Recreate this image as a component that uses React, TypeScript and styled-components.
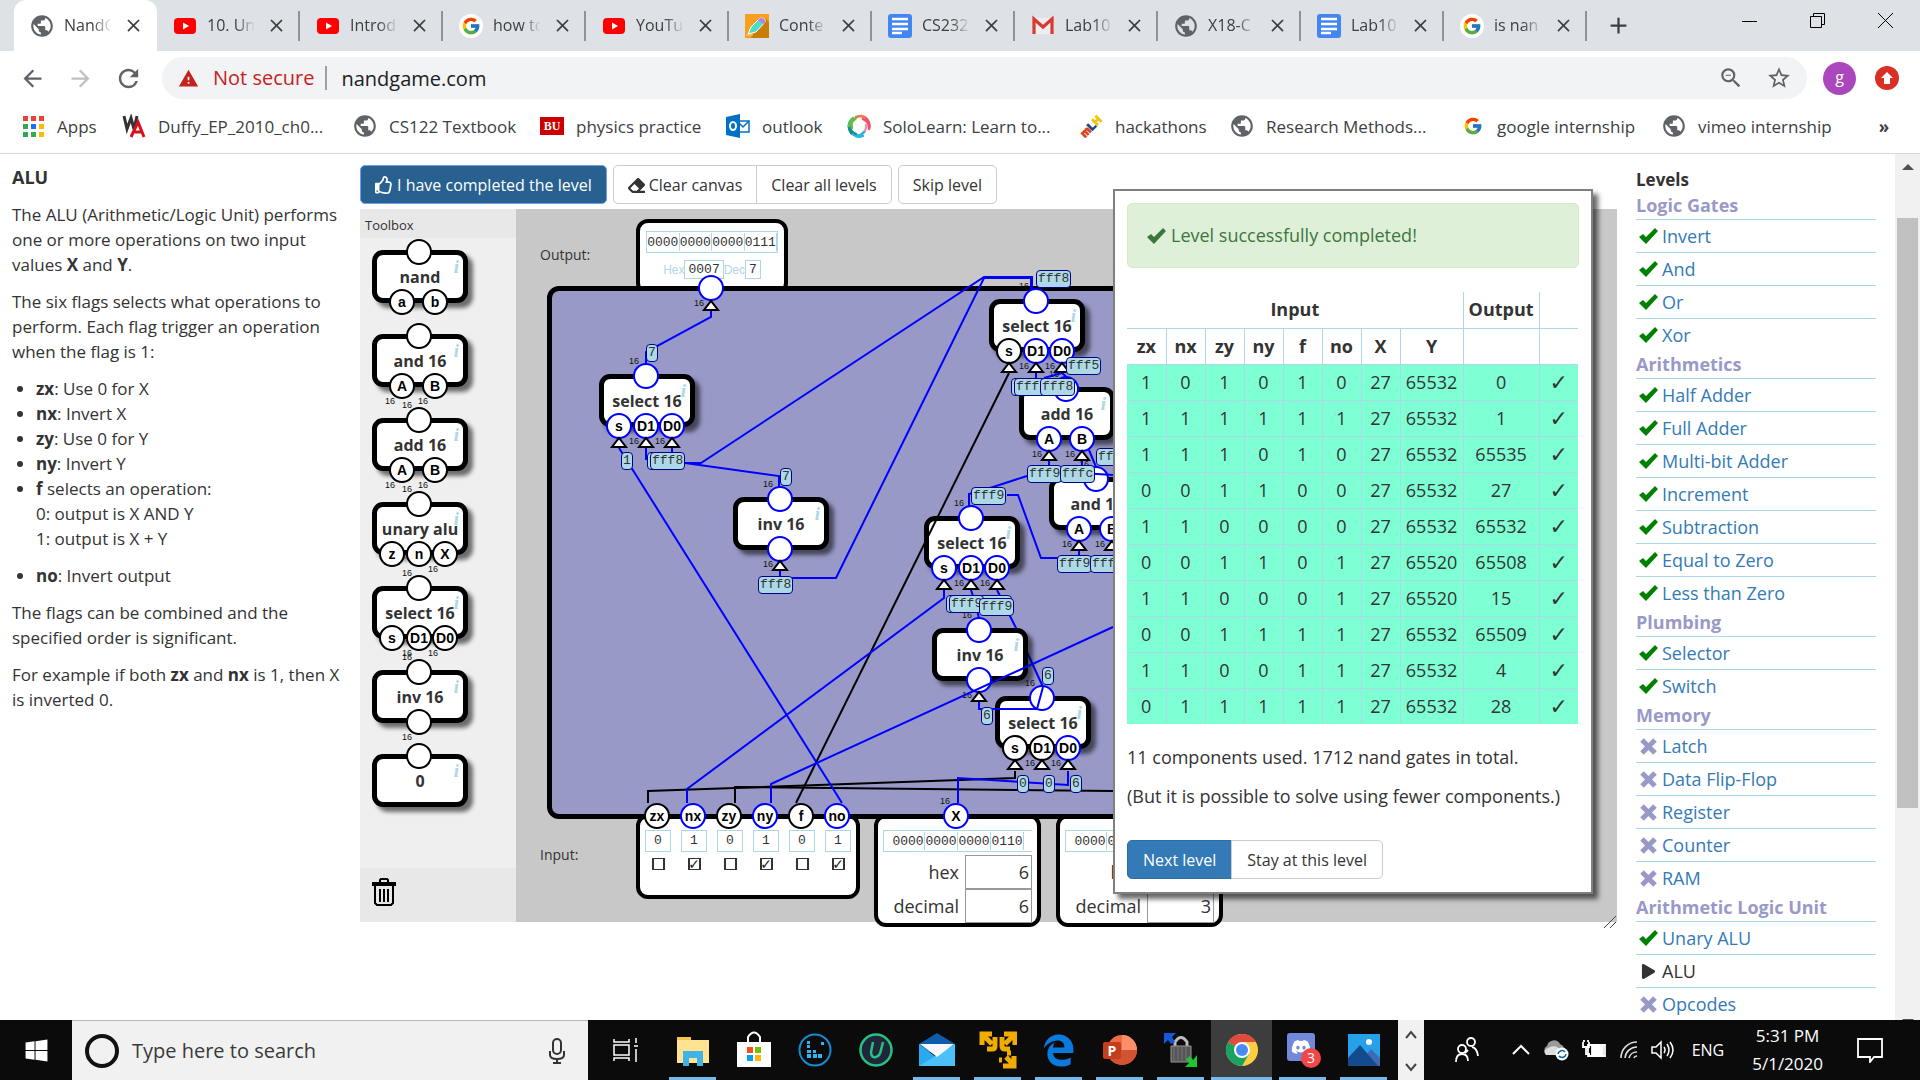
import React from 'react';
import styled, { createGlobalStyle } from 'styled-components';
import { FcGoogle } from 'react-icons/fc';
import { MdPublic, MdStarBorder, MdZoomOut, MdRefresh, MdArrowBack, MdArrowForward, MdClose, MdAdd, MdWarning } from 'react-icons/md';
import { FaRegThumbsUp, FaEraser, FaPlay, FaWindows, FaDiscord } from 'react-icons/fa';
import { FaEdgeLegacy } from 'react-icons/fa6';

const sans = '"Open Sans", "Noto Sans", sans-serif';
const arial = '"Liberation Sans", Arial, sans-serif';
const mono = '"Liberation Mono", "Courier New", monospace';

const GlobalStyle = createGlobalStyle`
  *, *::before, *::after { box-sizing: border-box; }
  body { margin: 0; background: #fff; font: 16px/25px ${sans}; color: #333; overflow: hidden; }
  button, input { font: inherit; color: inherit; margin: 0; }
  button { cursor: pointer; }
  a { text-decoration: none; color: inherit; }
  svg { display: block; flex: none; }
`;

const Desktop = styled.div`
  display: flex;
  flex-direction: column;
  height: 100vh;
`;

/* ---------- browser chrome ---------- */

const TabStrip = styled.div`
  display: flex;
  align-items: flex-start;
  height: 51px;
  padding-left: 14px;
  background: #dee1e6;
`;

const Tab = styled.div<{ $active?: boolean; $line?: boolean }>`
  display: flex;
  align-items: center;
  flex: 0 1 143px;
  min-width: 0;
  height: 51px;
  padding: 0 12px 0 16px;
  background-color: ${p => (p.$active ? '#fff' : 'transparent')};
  border-radius: ${p => (p.$active ? '12px 12px 0 0' : '0')};
  background-image: ${p => (p.$line ? 'linear-gradient(#8f9297, #8f9297)' : 'none')};
  background-size: 2px 30px;
  background-position: right center;
  background-repeat: no-repeat;
`;

const TabTitle = styled.span`
  flex: 1;
  min-width: 0;
  margin: 0 9px 0 10px;
  overflow: hidden;
  white-space: nowrap;
  font-size: 16px;
  color: #3c4043;
  mask-image: linear-gradient(90deg, #000 60%, transparent 100%);
`;

const IconButton = styled.button`
  display: flex;
  align-items: center;
  justify-content: center;
  flex: none;
  width: 24px;
  height: 24px;
  padding: 0;
  border: 0;
  background: none;
  color: #3c4043;
`;

const NewTab = styled(IconButton)`
  width: 62px;
  height: 51px;
`;

const WindowControls = styled.div`
  display: flex;
  margin-left: auto;
  button { width: 68px; height: 42px; color: #000; }
`;

const AddressRow = styled.div`
  display: flex;
  align-items: center;
  height: 54px;
  padding: 0 21px 0 18px;
`;

const NavButton = styled(IconButton)<{ $dim?: boolean }>`
  width: 28px;
  height: 28px;
  margin-right: 20px;
  color: ${p => (p.$dim ? '#bdc1c6' : '#5f6368')};
`;

const Omnibox = styled.div`
  display: flex;
  align-items: center;
  flex: 1;
  height: 42px;
  margin-right: 16px;
  padding: 0 16px;
  border-radius: 21px;
  background: #f1f3f4;
  font-size: 20px;
`;

const NotSecure = styled.span`
  display: flex;
  align-items: center;
  gap: 14px;
  margin-right: 14px;
  padding-right: 11px;
  border-right: 2px solid #9aa0a6;
  line-height: 24px;
  color: #c5221f;
`;

const UrlInput = styled.input`
  flex: 1;
  min-width: 0;
  border: 0;
  padding: 0;
  background: none;
  color: #202124;
`;

const OmniActions = styled.div`
  display: flex;
  gap: 24px;
  button { color: #5f6368; }
`;

const Avatar = styled.button`
  width: 33px;
  height: 33px;
  padding: 0 0 2px;
  border: 0;
  border-radius: 50%;
  background: #ab47bc;
  color: #fff;
  line-height: 30px;
`;

const UpdateButton = styled(IconButton)`
  margin-left: 19px;
  border-radius: 50%;
  background: #d93025;
`;

const BookmarkBar = styled.nav`
  display: flex;
  align-items: center;
  height: 49px;
  padding: 0 24px 6px 21px;
  border-bottom: 1px solid #d5d7d9;
  color: #3c4043;
  font-size: 17px;
`;

const MoreBookmarks = styled(IconButton)`
  margin-left: auto;
  font-weight: bold;
`;

const Bookmark = styled.a<{ $w: number }>`
  display: flex;
  align-items: center;
  gap: 12px;
  flex: 0 1 ${p => p.$w}px;
  white-space: nowrap;
`;

/* ---------- page ---------- */

const Page = styled.main`
  display: grid;
  grid-template-columns: 360px minmax(0, 1fr) 278px 25px;
  flex: 1;
  min-height: 0;
  overflow: hidden;
`;

const Description = styled.section`
  padding: 11px 12px;
  font-size: 17px;
  h1 { margin: 0 0 12px; font-size: 18px; line-height: 25px; }
  p { margin: 0 0 12px; }
  ul { margin: 0 0 12px; padding-left: 24px; }
  li + li:last-child { margin-top: 12px; }
`;

const Workspace = styled.section`
  position: relative;
  padding-top: 11px;
`;

const ButtonRow = styled.div`
  display: flex;
  gap: 6px;
  margin-bottom: 5px;
`;

const ButtonGroup = styled.div`
  display: flex;
  button:not(:first-child) { border-top-left-radius: 0; border-bottom-left-radius: 0; margin-left: -1px; }
  button:not(:last-child) { border-top-right-radius: 0; border-bottom-right-radius: 0; }
`;

const Button = styled.button<{ $kind?: 'primary' | 'active' }>`
  display: flex;
  align-items: center;
  gap: 4px;
  height: 39px;
  padding: 1px 14px 0;
  white-space: nowrap;
  border: 1px solid ${p => (p.$kind === 'active' ? '#6f9fe8' : p.$kind ? '#2e6da4' : '#ccc')};
  border-radius: 5px;
  background: ${p => (p.$kind === 'active' ? '#286090' : p.$kind ? '#337ab7' : '#fff')};
  color: ${p => (p.$kind ? '#fff' : '#333')};
`;

const Stage = styled.div`
  display: flex;
  height: 713px;
`;

const Toolbox = styled.aside`
  display: flex;
  flex-direction: column;
  width: 156px;
  background: #efefef;
`;

const ToolboxTitle = styled.div`
  height: 29px;
  padding: 4px 5px;
  background: #e8e8e8;
  font-size: 13px;
`;

const ToolList = styled.div`
  display: flex;
  flex-direction: column;
  gap: 31px;
  flex: 1;
  padding: 12px;
`;

const TrashBar = styled.div`
  height: 54px;
  padding: 9px 12px;
  background: #e8e8e8;
`;

const Canvas = styled.div`
  position: relative;
  flex: 1;
  background: #c8c8c8;
`;

const CanvasLabel = styled.span<{ $y: number }>`
  position: absolute;
  left: 24px;
  top: ${p => p.$y}px;
  font-size: 14px;
`;

const Board = styled.div`
  position: absolute;
  left: 31px;
  right: 37px;
  top: 77px;
  height: 533px;
  border: 5px solid #000;
  border-radius: 12px;
  background: #9999c8;
`;

const WireLayer = styled.svg`
  position: absolute;
  left: 0;
  top: 0;
  width: 100%;
  height: 100%;
  fill: none;
  pointer-events: none;
`;

const GateBox = styled.div`
  position: relative;
  display: flex;
  align-items: center;
  justify-content: center;
  width: 96px;
  height: 53px;
  padding-top: 2px;
  border: 5px solid #000;
  border-radius: 11px;
  background: #fff;
  box-shadow: 5px 5px 4px rgba(0, 0, 0, 0.55);
  font-weight: bold;
  white-space: nowrap;
`;

const Placed = styled.div<{ $x: number; $y: number }>`
  position: absolute;
  left: ${p => p.$x}px;
  top: ${p => p.$y}px;
`;

const InfoMark = styled.i`
  position: absolute;
  right: 4px;
  top: 2px;
  font: italic bold 19px/20px "Liberation Serif", serif;
  color: #add8e6;
`;

const Pin = styled.span<{ $on?: boolean; $x: number; $y: number }>`
  position: absolute;
  left: ${p => p.$x}px;
  top: ${p => p.$y}px;
  width: 26px;
  height: 26px;
  margin: -13px 0 0 -13px;
  border: 2px solid ${p => (p.$on ? '#0000ff' : '#000')};
  border-radius: 50%;
  background: #fff;
  font: bold 14px/22px ${arial};
  text-align: center;
  color: #000;
`;

const Width16 = styled.span<{ $x: number; $y: number }>`
  position: absolute;
  left: ${p => p.$x}px;
  top: ${p => p.$y}px;
  width: 20px;
  margin: -6px 0 0 -10px;
  font: 9px/12px ${arial};
  text-align: center;
  color: #111;
`;

const ValueTag = styled.span<{ $x: number; $y: number }>`
  position: absolute;
  left: ${p => p.$x}px;
  top: ${p => p.$y}px;
  height: 18px;
  padding: 0 1px;
  border: 1px solid #00008b;
  border-radius: 4px;
  background: #add8e6;
  font: 13px/16px ${mono};
`;

const Terminal = styled.div<{ $x: number; $y: number; $w: number; $h: number }>`
  position: absolute;
  left: ${p => p.$x}px;
  top: ${p => p.$y}px;
  width: ${p => p.$w}px;
  height: ${p => p.$h}px;
  border: 4px solid #000;
  border-radius: 12px;
  background: #fff;
`;

const OutputBody = styled.div`
  display: flex;
  flex-direction: column;
  align-items: center;
  gap: 7px;
  padding: 8px 6px;
`;

const InputBody = styled.div`
  padding: 12px 5px 0;
`;

const BitsBox = styled.div<{ $open?: boolean }>`
  display: flex;
  justify-content: center;
  width: 100%;
  height: 22px;
  padding: 1px 0;
  border: 1px solid #add8e6;
  border-right-width: ${p => (p.$open ? '0' : '1px')};
`;

const Nibble = styled.span`
  width: 33px;
  border-right: 1px solid #add8e6;
  font: 13px/19px ${mono};
  text-align: center;
`;

const HexRow = styled.div`
  display: flex;
  align-items: center;
  font: 12px/18px ${arial};
  color: #add8e6;
`;

const HexBox = styled.span`
  padding: 0 3px;
  border: 1px solid #add8e6;
  font: 13px/17px ${mono};
  color: #333;
`;

const FlagRow = styled.div`
  display: grid;
  grid-template-columns: repeat(6, 1fr);
  padding-top: 12px;
`;

const Flag = styled.label`
  display: flex;
  flex-direction: column;
  align-items: center;
  gap: 6px;
  font: 13px/20px ${mono};
  span { width: 26px; height: 22px; border: 1px solid #add8e6; text-align: center; }
`;

const CheckBox = styled.input`
  display: flex;
  align-items: center;
  justify-content: center;
  appearance: none;
  width: 13px;
  height: 12px;
  border: 1px solid #333;
  border-width: 1px 2px;
  &:checked::after { content: '✓'; font: bold 14px/10px "DejaVu Sans", sans-serif; color: #222; }
`;

const NumberRow = styled.label`
  display: flex;
  align-items: center;
  justify-content: flex-end;
  gap: 6px;
  height: 34px;
  font-size: 18px;
  &:first-of-type { margin-top: 3px; }
`;

const NumberInput = styled.input`
  width: 67px;
  height: 34px;
  padding: 0 2px;
  border: 1px solid #999;
  border-radius: 0;
  background: #fff;
  text-align: right;
`;

const ResizeGrip = styled.svg`
  position: absolute;
  right: 0;
  bottom: -7px;
`;

/* ---------- result dialog ---------- */

const Dialog = styled.div`
  position: absolute;
  right: 24px;
  top: 35px;
  width: 480px;
  height: 705px;
  padding: 12px;
  border: 2px solid #808080;
  background: #fff;
  box-shadow: 5px 5px 5px rgba(0, 0, 0, 0.6);
  font-size: 18px;
  p { margin: 0 0 12px; line-height: 27px; white-space: nowrap; }
`;

const Alert = styled.div`
  display: flex;
  align-items: center;
  gap: 5px;
  height: 65px;
  margin-bottom: 24px;
  padding: 0 19px;
  border: 1px solid #d6e9c6;
  border-radius: 5px;
  background: #dff0d8;
  color: #3c763d;
`;

const ResultTable = styled.table`
  width: 451px;
  margin-bottom: 20px;
  border-collapse: collapse;
  table-layout: fixed;
  text-align: center;
  th, td { height: 36px; padding: 0; border: 1px solid #add8e6; line-height: 27px; }
  tr > :first-child { border-left: 0; }
  tr > :last-child { border-right: 0; }
  thead tr:first-child th { border-top: 0; }
  tbody tr:last-child td { border-bottom: 0; }
  tbody { background: #7fffd4; }
  tbody td:last-child { font: bold 22px/27px "DejaVu Sans", sans-serif; }
`;

const DialogActions = styled(ButtonGroup)`
  margin-top: 30px;
  font-size: 16px;
  button { padding: 1px 15px 0; }
`;

/* ---------- levels ---------- */

const Levels = styled.nav`
  padding: 14px 19px;
  font-size: 18px;
  h2 { margin: 0; font-size: 17px; line-height: 24px; }
  h3 { margin: 0; height: 27px; font-size: 18px; line-height: 26px; color: #9999c8; white-space: nowrap; }
`;

const LevelLink = styled.a<{ $current?: boolean }>`
  display: flex;
  align-items: center;
  height: 33px;
  border-top: 1px solid #add8e6;
  color: ${p => (p.$current ? '#333' : '#337ab7')};
  svg { width: 19px; margin: 0 4px 0 3px; }
`;

const Scrollbar = styled.div`
  display: flex;
  flex-direction: column;
  align-items: center;
  min-height: 0;
  padding: 10px 0 9px;
  background: #f1f1f1;
`;

const Thumb = styled.div`
  width: 21px;
  height: 590px;
  margin: 48px 0 auto;
  background: #c1c1c1;
`;

/* ---------- taskbar ---------- */

const Taskbar = styled.footer`
  display: flex;
  height: 60px;
  background: #0b0b0b;
  color: #fff;
`;

const TaskButton = styled.button<{ $w?: number; $open?: boolean; $active?: boolean }>`
  position: relative;
  display: flex;
  align-items: center;
  justify-content: center;
  width: ${p => p.$w ?? 61}px;
  height: 60px;
  padding: 0;
  border: 0;
  background: ${p => (p.$active ? '#3d3d3d' : 'none')};
  color: #fff;
  &::after {
    content: '';
    position: absolute;
    left: ${p => (p.$active ? 0 : 7)}px;
    right: ${p => (p.$active ? 0 : 7)}px;
    bottom: 0;
    height: 3px;
    background: ${p => (p.$open ? '#76b9ed' : 'none')};
  }
`;

const SearchBox = styled.label`
  display: flex;
  align-items: center;
  width: 516px;
  padding: 0 22px 0 13px;
  border-top: 1px solid #b5b5b5;
  background: #f1f1f1;
  input { flex: 1; min-width: 0; margin-left: 13px; padding: 0; border: 0; background: none; font-size: 20px; }
  input::placeholder { color: #3a3a3a; opacity: 1; }
`;

const TaskScroll = styled.div`
  display: flex;
  flex-direction: column;
  align-items: center;
  justify-content: space-between;
  width: 26px;
  margin-left: 4px;
  padding: 10px 0 8px;
  background: #f1f1f1;
`;

const Tray = styled.div`
  display: flex;
  align-items: center;
  justify-content: flex-end;
  gap: 12px;
  flex: 1;
  padding-right: 37px;
  & > :first-child { margin-right: 20px; }
`;

const Clock = styled.time`
  display: flex;
  flex-direction: column;
  align-items: center;
  margin: 0 22px 0 16px;
  font-size: 17px;
  line-height: 28px;
`;

const TrayText = styled.span`
  margin-left: 5px;
`;

/* ---------- icons ---------- */

const YouTubeIcon = () => (
  <svg width="24" height="24" viewBox="0 0 24 24"><rect x="1" y="4" width="22" height="16" rx="4" fill="#f00" /><path d="M10 8.5v7l6-3.5z" fill="#fff" /></svg>
);
const DocsIcon = () => (
  <svg width="24" height="24" viewBox="0 0 24 24"><rect width="24" height="24" rx="3" fill="#4285f4" /><path d="M4 5h16M4 10h16M4 15h16M4 19h10" stroke="#fff" strokeWidth="2.4" /></svg>
);
const GmailIcon = () => (
  <svg width="24" height="24" viewBox="0 0 24 24"><path d="M3 4h18v16H3z" fill="#eee" /><path d="M3 20V5l9 8 9-8v15" fill="none" stroke="#d93a30" strokeWidth="3.2" /></svg>
);
const PencilIcon = () => (
  <svg width="24" height="24" viewBox="0 0 24 24"><path d="M0 0h24v24H0z" fill="#f7a01d" /><path d="M21 5l3 3v16H6l1-3z" fill="#c97c08" /><path d="M3 20l3-7L16 3l5 4-10 11z" fill="#4fdcc8" stroke="#fff" /><path d="M16 3l5 4-2 3-6-4z" fill="#c07be0" /><path d="M1 21h7" stroke="#ffd58a" /></svg>
);
const GoogleIcon = () => (
  <svg width="24" height="24" viewBox="0 0 24 24"><circle cx="12" cy="12" r="12" fill="#fff" /><g transform="translate(2 2)"><FcGoogle size={20} /></g></svg>
);
const Globe = () => (
  <svg width="24" height="24" viewBox="0 0 24 24"><g transform="translate(-1 -1)"><MdPublic size={26} color="#5f6368" /></g></svg>
);
const AppsIcon = () => (
  <svg width="24" height="24" viewBox="0 0 24 24">
    {['#ea4335', '#ea4335', '#ea4335', '#34a853', '#1a73e8', '#fbbc04', '#34a853', '#34a853', '#fbbc04'].map((c, i) => (
      <rect key={i} x={2 + (i % 3) * 8} y={2 + Math.floor(i / 3) * 8} width="5" height="5" fill={c} />
    ))}
  </svg>
);
const WaIcon = () => (
  <svg width="24" height="24" viewBox="0 0 24 24" fill="none" strokeWidth="3"><path d="M2 2l3 13L9 4l3 11L15 2" stroke="#333" /><path d="M9 23l7-15 6 15M12 18h8" stroke="#d5121b" /></svg>
);
const BuIcon = () => (
  <svg width="24" height="24" viewBox="0 0 24 24"><path d="M0 3h24v18H0z" fill="#c00" /><text x="12" y="16" fill="#fff" fontSize="12" fontWeight="bold" textAnchor="middle" fontFamily="Liberation Serif, serif">BU</text></svg>
);
const OutlookIcon = () => (
  <svg width="24" height="24" viewBox="0 0 24 24"><path d="M12 7h11v11H12z" fill="#fff" stroke="#0072c6" strokeWidth="1.5" /><path d="M13 9l4 4 6-6" fill="none" stroke="#0072c6" strokeWidth="1.5" /><path d="M0 3l14-3v24L0 21z" fill="#0072c6" /><ellipse cx="7" cy="12" rx="3" ry="4" fill="none" stroke="#fff" strokeWidth="2" /></svg>
);
const SoloIcon = () => (
  <svg width="24" height="24" viewBox="0 0 24 24" fill="none" strokeWidth="2.4" strokeLinecap="round">
    <path d="M7 6q4-6 11-3M9 3q6-2 10 1" stroke="#f2784b" />
    <path d="M16 5q6 2 6 9M20 5q4 5 2 10" stroke="#f0506e" />
    <path d="M19 11q1 7-6 10" stroke="#f48fb1" />
    <path d="M17 18q-5 6-12 2M16 22q-5 2-9-1" stroke="#29b6e0" />
    <path d="M9 20q-7-3-6-10M4 19Q0 13 3 8" stroke="#12908e" />
    <path d="M5 14Q3 8 9 4M2 12q0-5 4-8" stroke="#66bb4f" />
  </svg>
);
const MlhIcon = () => (
  <svg width="24" height="24" viewBox="0 0 24 24"><g transform="rotate(-45 12 12)" fontFamily="Liberation Sans, sans-serif" fontWeight="bold" fontSize="11" strokeWidth="1"><text x="-1" y="16" fill="#d9441e" stroke="#d9441e">m</text><text x="9" y="16" fill="#1d539f" stroke="#1d3c70">L</text><text x="16" y="16" fill="#f2c500" stroke="#f2c500">H</text></g></svg>
);
const TrashIcon = () => (
  <svg width="24" height="30" viewBox="0 0 24 30" fill="none" stroke="#000" strokeWidth="2"><path d="M8 5V3l1-1h6l1 1v2" /><path d="M0 7h24" strokeWidth="4" /><path d="M3 9v17l2 2h14l2-2V9" /><path d="M8 12v13M12 12v13M16 12v13" /></svg>
);
const CheckMark = ({ color }: { color: string }) => (
  <svg width="19" height="16" viewBox="0 0 19 16"><path d="M0 9l4-3 3 3L16 0l3 3L7 16z" fill={color} /></svg>
);
const CrossMark = () => (
  <svg width="17" height="17" viewBox="0 0 17 17"><path d="M2 2l13 13M15 2L2 15" stroke="#9999c8" strokeWidth="5" /></svg>
);
const ArrowMark = ({ down }: { down?: boolean }) => (
  <svg width="12" height="6" viewBox="0 0 12 6"><path d={down ? 'M0 0h12L6 6z' : 'M0 6h12L6 0z'} fill="#505050" /></svg>
);

/* ---------- gates ---------- */

type Kind = { name: string; pins: string[]; wide: number[] };
const KINDS: Record<string, Kind> = {
  nand: { name: 'nand', pins: ['a', 'b'], wide: [] },
  and: { name: 'and 16', pins: ['A', 'B'], wide: [0, 1] },
  add: { name: 'add 16', pins: ['A', 'B'], wide: [0, 1] },
  unary: { name: 'unary alu', pins: ['z', 'n', 'X'], wide: [2] },
  select: { name: 'select 16', pins: ['s', 'D1', 'D0'], wide: [1, 2] },
  inv: { name: 'inv 16', pins: [''], wide: [0] },
  zero: { name: '0', pins: [], wide: [] },
};
const PIN_X: Record<number, number[]> = { 0: [], 1: [42], 2: [25, 58], 3: [15, 42, 68] };

const Triangle = ({ x, y }: { x: number; y: number }) => (
  <path d={`M${x - 7} ${y + 10}h14l-7-9z`} fill="#fff" stroke="#000" strokeWidth="2" />
);

function Gate({ kind, live, dark = [], out16 }: { kind: string; live?: boolean; dark?: number[]; out16?: boolean }) {
  const k = KINDS[kind];
  const xs = PIN_X[k.pins.length];
  return (
    <GateBox>
      <InfoMark>i</InfoMark>
      {k.name}
      {out16 && <Width16 $x={30} $y={-18}>16</Width16>}
      <Pin $x={42} $y={-3} $on={live} />
      {k.wide.map(i => <Width16 key={i} $x={xs[i] - 12} $y={62}>16</Width16>)}
      {k.pins.map((p, i) => <Pin key={i} $x={xs[i]} $y={47} $on={live && !dark.includes(i)}>{p}</Pin>)}
    </GateBox>
  );
}

const TOOLS: [string, boolean][] = [['nand', false], ['and', false], ['add', true], ['unary', true], ['select', true], ['inv', true], ['zero', false]];

/* x is the centre of the output pin, y the top edge of the gate */
const GATES: { kind: string; x: number; y: number; dark?: number[] }[] = [
  { kind: 'select', x: 130, y: 165 },
  { kind: 'inv', x: 264, y: 288 },
  { kind: 'select', x: 520, y: 90, dark: [0] },
  { kind: 'add', x: 550, y: 178 },
  { kind: 'and', x: 580, y: 268 },
  { kind: 'select', x: 455, y: 307 },
  { kind: 'inv', x: 463, y: 419 },
  { kind: 'select', x: 526, y: 487, dark: [0, 1] },
];

const BACK_WIRES = ['481,381 500,419 527,478', '546,164 562,178 562,186', '573,241 580,258 586,261'];
const BLUE_WIRES = [
  '195,101 195,108 130,143 130,156',
  '103,239 326,594',
  '130,239 130,250 140,253',
  '156,239 156,248',
  '169,254 185,254 468,68 516,68 516,81',
  '169,254 263,267 263,278',
  '264,362 264,369 320,369 468,69 515,69 515,81',
  '520,164 520,170',
  '546,164 528,169',
  '533,252 533,257',
  '511,267 474,279 453,285 453,298',
  '491,286 502,286 525,349 563,349 563,342',
  '566,252 566,264 597,266',
  '428,381 428,389 171,580 171,594',
  '455,381 457,387 463,409',
  '527,478 521,500 463,500 463,492',
  '255,594 255,575 597,418',
  '442,594 442,569 552,576 552,562',
];
const BLACK_WIRES = ['493,164 280,594', '132,594 132,582 499,569 499,562', '219,594 219,578 597,582'];

const TAGS: [number, number, string][] = [
  [130, 135, '7'], [105, 243, '1'], [131, 243, 'fff8'], [134, 243, 'fff8'], [264, 259, '7'], [242, 367, 'fff8'],
  [520, 61, 'fff8'], [495, 169, 'fff8'], [498, 169, 'fff8'], [524, 169, 'fff8'], [550, 148, 'fff5'],
  [580, 239, 'fffc'], [511, 256, 'fff9'], [544, 256, 'fffc'], [455, 278, 'fff9'], [541, 346, 'fff9'], [574, 346, 'fffc'],
  [461, 386, 'fff9'], [430, 386, 'fff9'], [433, 386, 'fff9'], [463, 389, 'fff9'], [526, 458, '6'], [465, 498, '6'],
  [501, 566, '0'], [527, 566, '0'], [554, 566, '6'],
];

const FLAGS: [string, boolean][] = [['zx', false], ['nx', true], ['zy', false], ['ny', true], ['f', false], ['no', true]];

const Bits = ({ value, open }: { value: string[]; open?: boolean }) => (
  <BitsBox $open={open}>{value.map((n, i) => <Nibble key={i}>{n}</Nibble>)}</BitsBox>
);

function WordInput({ x, bits, value }: { x: number; bits: string[]; value: string }) {
  return (
    <Terminal $x={x} $y={605} $w={167} $h={113}>
      <InputBody>
        <Bits open value={bits} />
        <NumberRow>hex<NumberInput defaultValue={value} /></NumberRow>
        <NumberRow>decimal<NumberInput defaultValue={value} /></NumberRow>
      </InputBody>
    </Terminal>
  );
}

function Circuit() {
  return (
    <Canvas>
      <CanvasLabel $y={33}>Output:</CanvasLabel>
      <CanvasLabel $y={633}>Input:</CanvasLabel>
      <Terminal $x={120} $y={10} $w={152} $h={76}>
        <OutputBody>
          <Bits value={['0000', '0000', '0000', '0111']} />
          <HexRow>Hex<HexBox>0007</HexBox>Dec<HexBox>7</HexBox></HexRow>
        </OutputBody>
      </Terminal>
      <Terminal $x={120} $y={605} $w={224} $h={85}>
        <FlagRow>
          {FLAGS.map(([name, on]) => (
            <Flag key={name}><span>{on ? 1 : 0}</span><CheckBox type="checkbox" aria-label={name} defaultChecked={on} /></Flag>
          ))}
        </FlagRow>
      </Terminal>
      <WordInput x={358} bits={['0000', '0000', '0000', '0110']} value="6" />
      <WordInput x={540} bits={['0000', '0000', '0000', '0011']} value="3" />
      <Board />
      <WireLayer>
        {BACK_WIRES.map(w => <polyline key={w} points={w} stroke="#0000ff" strokeWidth="2" />)}
      </WireLayer>
      {GATES.map(g => (
        <Placed key={`${g.x}-${g.y}`} $x={g.x - 47} $y={g.y}><Gate kind={g.kind} live out16 dark={g.dark} /></Placed>
      ))}
      <Pin $x={195} $y={79} $on />
      <Width16 $x={183} $y={94}>16</Width16>
      {FLAGS.map(([name, on], i) => <Pin key={name} $x={141 + i * 36} $y={607} $on={on}>{name}</Pin>)}
      <Pin $x={440} $y={607} $on>X</Pin>
      <Width16 $x={429} $y={592}>16</Width16>
      <WireLayer>
        {BLACK_WIRES.map(w => <polyline key={w} points={w} stroke="#000" strokeWidth="2" />)}
        {BLUE_WIRES.map(w => <polyline key={w} points={w} stroke="#0000ff" strokeWidth="2" />)}
        <Triangle x={195} y={91} />
        {GATES.map(g => PIN_X[KINDS[g.kind].pins.length].map(px => <Triangle key={`${g.x}-${g.y}-${px}`} x={g.x - 42 + px} y={g.y + 63} />))}
      </WireLayer>
      {TAGS.map(([x, y, t]) => <ValueTag key={`${x}-${y}`} $x={x} $y={y}>{t}</ValueTag>)}
      <ResizeGrip width="14" height="14" viewBox="0 0 14 14"><path d="M1 13L13 1M7 13l6-6" stroke="#444" /></ResizeGrip>
    </Canvas>
  );
}

const HEAD = ['zx', 'nx', 'zy', 'ny', 'f', 'no', 'X', 'Y', '', ''];
const WIDTHS = [39, 39, 39, 39, 39, 39, 39, 63, 76, 39];
const ROWS = [
  '1 0 1 0 1 0 27 65532 0', '1 1 1 1 1 1 27 65532 1', '1 1 1 0 1 0 27 65532 65535', '0 0 1 1 0 0 27 65532 27',
  '1 1 0 0 0 0 27 65532 65532', '0 0 1 1 0 1 27 65520 65508', '1 1 0 0 0 1 27 65520 15', '0 0 1 1 1 1 27 65532 65509',
  '1 1 0 0 1 1 27 65532 4', '0 1 1 1 1 1 27 65532 28',
];

function ResultDialog() {
  return (
    <Dialog role="dialog" aria-label="Level result">
      <Alert><CheckMark color="#3c763d" />Level successfully completed!</Alert>
      <ResultTable>
        <colgroup>{WIDTHS.map((w, i) => <col key={i} width={w} />)}</colgroup>
        <thead>
          <tr><th colSpan={8}>Input</th><th>Output</th><th /></tr>
          <tr>{HEAD.map((h, i) => <th key={i}>{h}</th>)}</tr>
        </thead>
        <tbody>
          {ROWS.map(r => <tr key={r}>{r.split(' ').map((c, i) => <td key={i}>{c}</td>)}<td>✓</td></tr>)}
        </tbody>
      </ResultTable>
      <p>11 components used. 1712 nand gates in total.</p>
      <p>(But it is possible to solve using fewer components.)</p>
      <DialogActions>
        <Button $kind="primary">Next level</Button>
        <Button>Stay at this level</Button>
      </DialogActions>
    </Dialog>
  );
}

const LEVELS: [string, [string, string][]][] = [
  ['Logic Gates', [['Invert', 'ok'], ['And', 'ok'], ['Or', 'ok'], ['Xor', 'ok']]],
  ['Arithmetics', [['Half Adder', 'ok'], ['Full Adder', 'ok'], ['Multi-bit Adder', 'ok'], ['Increment', 'ok'], ['Subtraction', 'ok'], ['Equal to Zero', 'ok'], ['Less than Zero', 'ok']]],
  ['Plumbing', [['Selector', 'ok'], ['Switch', 'ok']]],
  ['Memory', [['Latch', 'no'], ['Data Flip-Flop', 'no'], ['Register', 'no'], ['Counter', 'no'], ['RAM', 'no']]],
  ['Arithmetic Logic Unit', [['Unary ALU', 'ok'], ['ALU', 'now'], ['Opcodes', 'no']]],
];

const TABS: [React.ReactNode, string][] = [
  [<Globe />, 'NandG'], [<YouTubeIcon />, '10. Un'], [<YouTubeIcon />, 'Introd'], [<GoogleIcon />, 'how to'],
  [<YouTubeIcon />, 'YouTu'], [<PencilIcon />, 'Conte'], [<DocsIcon />, 'CS232'], [<GmailIcon />, 'Lab10'],
  [<Globe />, 'X18-C'], [<DocsIcon />, 'Lab10'], [<GoogleIcon />, 'is nan'],
];

const BOOKMARKS: [React.ReactNode, string, number][] = [
  [<AppsIcon />, 'Apps', 101], [<WaIcon />, 'Duffy_EP_2010_ch0...', 231], [<Globe />, 'CS122 Textbook', 187], [<BuIcon />, 'physics practice', 186],
  [<OutlookIcon />, 'outlook', 121], [<SoloIcon />, 'SoloLearn: Learn to...', 232], [<MlhIcon />, 'hackathons', 151], [<Globe />, 'Research Methods...', 231],
  [<GoogleIcon />, 'google internship', 201], [<Globe />, 'vimeo internship', 158],
];

const TaskIcons: { label: string; open?: boolean; active?: boolean; icon: React.ReactNode }[] = [
  { label: 'File Explorer', open: true, icon: <svg width="34" height="34" viewBox="0 0 34 34"><path d="M1 4h14v3h18v23H1z" fill="#f5c64b" /><path d="M1 7h32v23H1z" fill="#ffe393" /><path d="M7 33V18h20v15h-6v-8h-8v8z" fill="#3fb4e8" /></svg> },
  { label: 'Store', icon: <svg width="36" height="38" viewBox="0 0 36 38"><path d="M12 11V6q6-9 12 0v5" fill="none" stroke="#fff" strokeWidth="2" /><path d="M1 11h34v25H1z" fill="#fff" /><path d="M11 16h6v6h-6z" fill="#f25022" /><path d="M19 16h6v6h-6z" fill="#7fba00" /><path d="M11 24h6v6h-6z" fill="#00a4ef" /><path d="M19 24h6v6h-6z" fill="#ffb900" /></svg> },
  { label: 'Monitor', icon: <svg width="34" height="34" viewBox="0 0 34 34"><circle cx="17" cy="17" r="15.500" fill="none" stroke="#158bd4" strokeWidth="2" /><path d="M9 8h3v3H9zM9 12h3v3H9zM9 17h4v3H9zM9 21h4v4H9zM15 17h3v3h-3zM15 21h4v4h-4zM20 21h4v4h-4zM23 9h3v3h-3z" fill="#30b4f5" /></svg> },
  { label: 'IObit', icon: <svg width="34" height="34" viewBox="0 0 34 34" fill="none"><circle cx="17" cy="17" r="15.500" fill="#22263a" stroke="#26c281" strokeWidth="2.500" /><path d="M14 9l-2 10q0 6 5 5 4-1 5-7l2-8" stroke="#26c281" strokeWidth="2.500" /></svg> },
  { label: 'Mail', open: true, icon: <svg width="38" height="36" viewBox="0 0 38 36"><path d="M19 1l18 11v8H1v-8z" fill="#0f5cab" /><path d="M1 12l18 14 18-14v22H1z" fill="#29a9ee" /><path d="M1 34l36-22v22z" fill="#4cc0f8" /><path d="M2 12h34L19 25z" fill="#f4f8fb" /></svg> },
  { label: 'VMware', open: true, icon: <svg width="38" height="38" viewBox="0 0 38 38" fill="none" stroke="#f0ad00" strokeWidth="5"><path d="M3 14V3h10M4 4l9 9M16 6v9q0 3-3 3H8" /><path d="M25 3h11v11M35 4l-9 9M23 6v9q0 3 3 3h5" /><path d="M35 25v10H24M35 34l-8-8M20 29h3M28 22h4" /></svg> },
  { label: 'Edge', open: true, icon: <FaEdgeLegacy size={33} color="#0a7bdc" /> },
  { label: 'PowerPoint', open: true, icon: <svg width="36" height="34" viewBox="0 0 36 34"><circle cx="20" cy="17" r="15" fill="#ed6c47" /><path d="M20 2a15 15 0 0 1 15 15H20z" fill="#ff8f6b" /><path d="M5 17a15 15 0 0 0 30 0z" fill="#d35230" /><rect x="1" y="9" width="18" height="17" rx="2" fill="#c43e1c" /><text x="10" y="23" fill="#fff" fontSize="14" fontWeight="bold" textAnchor="middle" fontFamily="Open Sans, sans-serif">P</text></svg> },
  { label: 'PuTTY', open: true, icon: <svg width="36" height="38" viewBox="0 0 36 38"><path d="M12 15v-4q6-9 12 0v4" fill="none" stroke="#bbb" strokeWidth="3" /><path d="M8 15h20v16H8z" fill="#555" stroke="#999" /><path d="M11 16v14M15 16v14M19 16v14M23 16v14" stroke="#777" /><path d="M1 2h12L9 6l3 5-4 2-3-4-4 4z" fill="#1459d8" /><path d="M34 24v12H22l4-4-3-4 4-3 3 4z" fill="#1fc434" /></svg> },
  { label: 'Chrome', open: true, active: true, icon: <svg width="34" height="34" viewBox="0 0 34 34"><circle cx="17" cy="17" r="16" fill="#ffcd40" /><path d="M17 17L3.100 9A16 16 0 0 1 30.900 9H17z" fill="#e04a3f" /><path d="M3.100 9A16 16 0 0 0 17 33l7-12-7-4z" fill="#1aa260" /><circle cx="17" cy="17" r="8" fill="#fff" /><circle cx="17" cy="17" r="6" fill="#4a8af4" /></svg> },
  { label: 'Discord', open: true, icon: <svg width="38" height="40" viewBox="0 0 38 40"><rect x="3" y="3" width="28" height="28" rx="3" fill="#7289da" /><g transform="translate(7 7)" color="#fff"><FaDiscord size={20} /></g><circle cx="27" cy="28" r="10" fill="#f04747" /><text x="27" y="33" fill="#fff" fontSize="14" textAnchor="middle" fontFamily="Open Sans, sans-serif">3</text></svg> },
  { label: 'Photos', open: true, icon: <svg width="34" height="34" viewBox="0 0 34 34"><path d="M1 1h32v32H1z" fill="#27a0ea" /><path d="M17 24l7-8 9 9v8H17z" fill="#3d6cb4" /><path d="M1 25l12-13 18 21H1z" fill="#134b8c" /><circle cx="22" cy="9" r="3" fill="#fff" /></svg> },
];

const status = { ok: <CheckMark color="#008000" />, no: <CrossMark />, now: <FaPlay size={15} color="#333" /> } as Record<string, React.ReactNode>;

export default function App() {
  return (
    <Desktop>
      <GlobalStyle />
      <header>
        <TabStrip>
          {TABS.map(([icon, title], i) => (
            <Tab key={i} $active={i === 0} $line={i > 0}>
              {icon}<TabTitle>{title}</TabTitle><IconButton aria-label="Close tab"><MdClose size={21} /></IconButton>
            </Tab>
          ))}
          <NewTab aria-label="New tab"><MdAdd size={27} /></NewTab>
          <WindowControls>
            <IconButton aria-label="Minimize"><svg width="16" height="16"><path d="M0 8.500h15" stroke="#000" /></svg></IconButton>
            <IconButton aria-label="Restore"><svg width="16" height="16" fill="none" stroke="#000"><path d="M.5 3.500h11v11H.5zM3.500 3.500v-3h11v11h-3" /></svg></IconButton>
            <IconButton aria-label="Close"><svg width="16" height="16" stroke="#000"><path d="M0 0l15 15M15 0L0 15" /></svg></IconButton>
          </WindowControls>
        </TabStrip>
        <AddressRow>
          <NavButton aria-label="Back"><MdArrowBack size={27} /></NavButton>
          <NavButton aria-label="Forward" $dim><MdArrowForward size={27} /></NavButton>
          <NavButton aria-label="Reload"><MdRefresh size={29} /></NavButton>
          <Omnibox>
            <NotSecure><MdWarning size={21} />Not secure</NotSecure>
            <UrlInput aria-label="Address" defaultValue="nandgame.com" />
            <OmniActions>
              <IconButton aria-label="Zoom"><MdZoomOut size={26} /></IconButton>
              <IconButton aria-label="Bookmark"><MdStarBorder size={26} /></IconButton>
            </OmniActions>
          </Omnibox>
          <Avatar>g</Avatar>
          <UpdateButton aria-label="Update"><svg width="14" height="14" viewBox="0 0 14 14"><path d="M7 1l6 6h-3v6H4V7H1z" fill="#fff" /></svg></UpdateButton>
        </AddressRow>
        <BookmarkBar>
          {BOOKMARKS.map(([icon, text, w]) => <Bookmark key={text} href="#" $w={w}>{icon}{text}</Bookmark>)}
          <MoreBookmarks aria-label="More bookmarks">»</MoreBookmarks>
        </BookmarkBar>
      </header>

      <Page>
        <Description>
          <h1>ALU</h1>
          <p>The ALU (Arithmetic/Logic Unit) performs one or more operations on two input values <b>X</b> and <b>Y</b>.</p>
          <p>The six flags selects what operations to perform. Each flag trigger an operation when the flag is 1:</p>
          <ul>
            <li><b>zx</b>: Use 0 for X</li>
            <li><b>nx</b>: Invert X</li>
            <li><b>zy</b>: Use 0 for Y</li>
            <li><b>ny</b>: Invert Y</li>
            <li><b>f</b> selects an operation:<br />0: output is X AND Y<br />1: output is X + Y</li>
            <li><b>no</b>: Invert output</li>
          </ul>
          <p>The flags can be combined and the specified order is significant.</p>
          <p>For example if both <b>zx</b> and <b>nx</b> is 1, then X is inverted 0.</p>
        </Description>

        <Workspace>
          <ButtonRow>
            <Button $kind="active"><FaRegThumbsUp size={18} />I have completed the level</Button>
            <ButtonGroup>
              <Button><FaEraser size={17} />Clear canvas</Button>
              <Button>Clear all levels</Button>
            </ButtonGroup>
            <Button>Skip level</Button>
          </ButtonRow>
          <Stage>
            <Toolbox>
              <ToolboxTitle>Toolbox</ToolboxTitle>
              <ToolList>{TOOLS.map(([kind, out16]) => <Gate key={kind} kind={kind} out16={out16} />)}</ToolList>
              <TrashBar><TrashIcon /></TrashBar>
            </Toolbox>
            <Circuit />
          </Stage>
          <ResultDialog />
        </Workspace>

        <Levels>
          <h2>Levels</h2>
          {LEVELS.map(([group, items]) => (
            <section key={group}>
              <h3>{group}</h3>
              {items.map(([name, state]) => <LevelLink key={name} href="#" $current={state === 'now'}>{status[state]}{name}</LevelLink>)}
            </section>
          ))}
        </Levels>

        <Scrollbar><ArrowMark /><Thumb /><ArrowMark down /></Scrollbar>
      </Page>

      <Taskbar>
        <TaskButton $w={72} aria-label="Start"><FaWindows size={25} /></TaskButton>
        <SearchBox>
          <svg width="34" height="34" viewBox="0 0 34 34"><circle cx="17" cy="17" r="15" fill="none" stroke="#111" strokeWidth="4" /></svg>
          <input placeholder="Type here to search" aria-label="Search" />
          <svg width="18" height="26" viewBox="0 0 18 26" fill="none" stroke="#333" strokeWidth="2"><rect x="5" y="1" width="8" height="15" rx="4" /><path d="M2 13v4q0 4 7 4t7-4v-4M9 21v4M5 25h8" /></svg>
        </SearchBox>
        <TaskButton $w={74} aria-label="Task view"><svg width="26" height="24" viewBox="0 0 26 24" fill="none" stroke="#fff" strokeWidth="1.500"><path d="M2 1v3h15V1M2 23v-3h15v3M2 7h15v10H2zM24 0v5M24 11v13M22 8h4" /></svg></TaskButton>
        {TaskIcons.map(t => <TaskButton key={t.label} aria-label={t.label} $open={t.open} $active={t.active}>{t.icon}</TaskButton>)}
        <TaskScroll>
          <svg width="12" height="10" fill="none" stroke="#444" strokeWidth="2"><path d="M1 8l5-6 5 6" /></svg>
          <svg width="12" height="10" fill="none" stroke="#444" strokeWidth="2"><path d="M1 2l5 6 5-6" /></svg>
        </TaskScroll>
        <Tray>
          <svg width="24" height="26" viewBox="0 0 24 26" fill="none" stroke="#fff" strokeWidth="1.800"><circle cx="16" cy="5" r="4" /><circle cx="7" cy="12" r="4" /><path d="M1 25q0-8 6-8t6 7M10 16l3-3M17 10q5 1 6 9" /></svg>
          <svg width="20" height="12" fill="none" stroke="#fff" strokeWidth="2"><path d="M2 10l8-8 8 8" /></svg>
          <svg width="26" height="22" viewBox="0 0 26 22"><path d="M4 16a5 5 0 0 1 0-9A7 7 0 0 1 17 5q5 2 5 8H4z" fill="#999" /><path d="M3 16a4 4 0 0 1 2-7q8-5 15 4v3z" fill="#ddd" /><circle cx="19" cy="15" r="6.500" fill="#fff" /><path d="M15 15a4 4 0 0 1 7-2M23 15a4 4 0 0 1-7 2" fill="none" stroke="#0a64b0" strokeWidth="1.600" /></svg>
          <svg width="26" height="20" viewBox="0 0 26 20" fill="none" stroke="#fff" strokeWidth="1.800"><path d="M7 5h17v11H7z" /><path d="M11 7h11v7H11z" fill="#fff" /><path d="M2 2v5h6V2M5 7v7h4M3 0v2M7 0v2" /></svg>
          <svg width="20" height="20" viewBox="0 0 20 20" fill="none" stroke="#ddd" strokeWidth="1.600"><path d="M2 18A16 16 0 0 1 18 2M6 18A12 12 0 0 1 18 7M10 18a8 8 0 0 1 8-6M15 18a3 3 0 0 1 3-2" /></svg>
          <svg width="24" height="20" viewBox="0 0 24 20" fill="none" stroke="#fff" strokeWidth="1.500"><path d="M1 7h4l5-5v16l-5-5H1zM13 7q2 3 0 6M16 4q4 6 0 12M19 2q6 8 0 16" /></svg>
          <TrayText>ENG</TrayText>
          <Clock><span>5:31 PM</span><span>5/1/2020</span></Clock>
          <svg width="26" height="26" viewBox="0 0 26 26" fill="none" stroke="#fff" strokeWidth="1.800"><path d="M1 2h24v18h-8l-4 5v-5H1z" /></svg>
        </Tray>
      </Taskbar>
    </Desktop>
  );
}
